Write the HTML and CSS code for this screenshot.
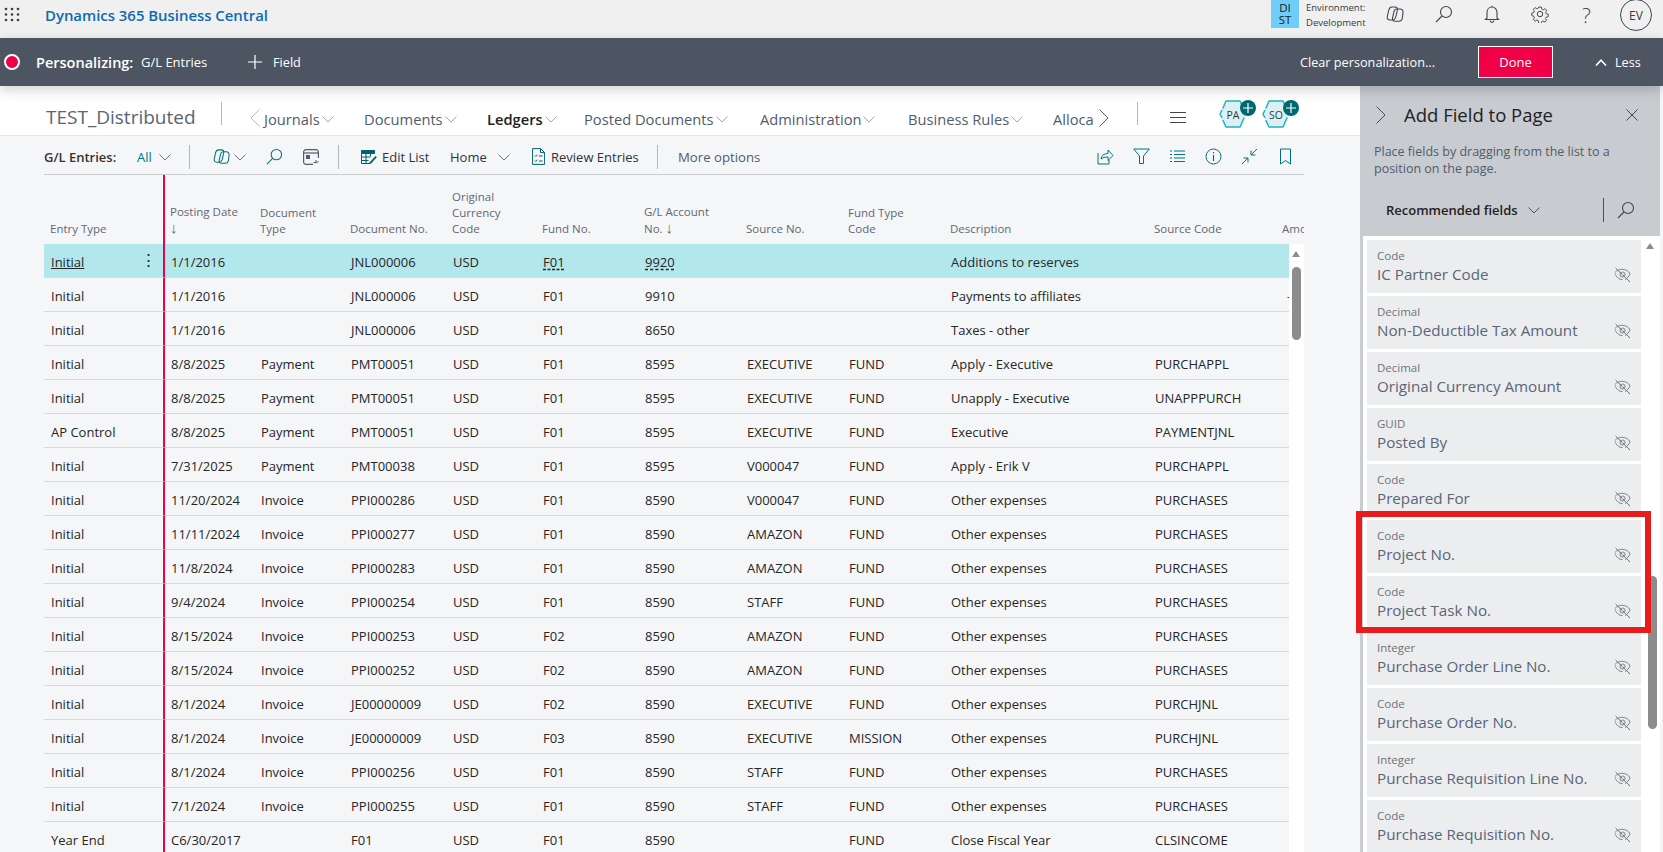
FILE: index.html
```html
<!DOCTYPE html>
<html lang="en">
<head>
<meta charset="utf-8">
<title>G/L Entries</title>
<link rel="stylesheet" href="styles.css">
</head>
<body>
<svg class="sprite" width="0" height="0" aria-hidden="true">
  <symbol id="i-chev" viewBox="0 0 12 7"><path d="M.5.5 6 6 11.500.5" fill="none" stroke="currentColor"/></symbol>
  <symbol id="i-search" viewBox="0 0 18 18"><circle cx="11" cy="7" r="5.500" fill="none" stroke="currentColor" stroke-width="1.100"/><path d="M7 11 1 17" fill="none" stroke="currentColor" stroke-width="1.100"/></symbol>
  <symbol id="i-copilot" viewBox="0 0 18 18"><path d="M6 2h3c1.800 0 2.800 1.200 2.400 3l-1.500 6.500C9.400 13.700 8 15 6 15H4c-2 0-3.200-1.400-2.700-3.400L2.800 5C3.300 3 4.200 2 6 2Z" fill="none" stroke="currentColor" stroke-width="1.100"/><path d="M10.500 4H14c2 0 3.200 1.400 3 3.400l-.6 5.600c-.3 2-1.500 3.200-3.400 3.200H9c-1.800 0-2.900-1.300-2.500-3L8 6.500C8.400 4.900 9 4 10.500 4Z" fill="none" stroke="currentColor" stroke-width="1.100"/></symbol>
  <symbol id="i-eye" viewBox="0 0 17 16"><path d="M1 5.500C3 3 5.600 2.300 8.500 2.300c3 0 5.600 1.300 7.500 4.500-1.300 2.800-2.700 4.700-5 5.700M1 6.500c1 2.700 3 5.500 7.500 6.300" fill="none" stroke="currentColor" stroke-width=".9"/><circle cx="8.500" cy="7.500" r="2.500" fill="none" stroke="currentColor" stroke-width=".9"/><path d="m1.500 1 14.500 14" fill="none" stroke="currentColor" stroke-width="1"/></symbol>
  <symbol id="i-hex" viewBox="0 0 28 28"><path d="M7 1h14l6 13-6 13H7L1 14Z" fill="#dcf0f2"/><path d="M4 8 7 1h14l3.500 7.500M25 18l-4 9H7l-3-6.500M2.800 10.500 1 14l1.800 3.500" fill="none" stroke="#1fb3bd" stroke-width="1.500" stroke-linecap="round" stroke-linejoin="round"/></symbol>
</svg>

<header class="topbar">
  <svg class="waffle" viewBox="0 0 16 15" width="16" height="15"><g fill="#3b3b3b"><circle cx="2" cy="2" r="1.300"/><circle cx="8" cy="2" r="1.300"/><circle cx="14" cy="2" r="1.300"/><circle cx="2" cy="7.500" r="1.300"/><circle cx="8" cy="7.500" r="1.300"/><circle cx="14" cy="7.500" r="1.300"/><circle cx="2" cy="13" r="1.300"/><circle cx="8" cy="13" r="1.300"/><circle cx="14" cy="13" r="1.300"/></g></svg>
  <div class="brand">Dynamics 365 Business Central</div>
  <div class="env-tile">DI<br>ST</div>
  <div class="env-text">Environment:<br>Development</div>
  <svg class="top-icon ic-copilot" width="18" height="18"><use href="#i-copilot"/></svg>
  <svg class="top-icon ic-search" width="18" height="18"><use href="#i-search"/></svg>
  <svg class="top-icon ic-bell" viewBox="0 0 16 18" width="16" height="18"><path d="M3 13V7.500C3 4.300 5.200 2 8 2s5 2.300 5 5.500V13l1.500 1.500h-13ZM6 15.500c.3 1.300 1 1.900 2 1.900s1.700-.6 2-1.900M8 2V.8" fill="none" stroke="currentColor" stroke-width="1.100"/></svg>
  <svg class="top-icon ic-gear" viewBox="0 0 18 18" width="18" height="18"><circle cx="9" cy="9" r="2.700" fill="none" stroke="currentColor"/><path d="M7.500 1h3l.5 2.400 1.800.8 2-1.300 2 2.100-1.300 2 .7 1.700 2.300.5v3l-2.300.5-.8 1.800 1.300 2-2 2-2-1.300-1.700.8-.5 2.300h-3L7 16.900l-1.800-.8-2 1.300-2.100-2 1.300-2L1.600 11.600-.6 11V8l2.300-.6.7-1.700-1.300-2 2.100-2.100 2 1.300 1.800-.7Z" transform="translate(1.300 1.200) scale(.86)" fill="none" stroke="currentColor" stroke-width="1.100"/></svg>
  <span class="top-help">?</span>
  <div class="avatar">EV</div>
</header>

<div class="personal-bar">
  <span class="rec-dot"></span>
  <span class="pers-label">Personalizing:</span>
  <span class="pers-page">G/L Entries</span>
  <svg class="pers-plus" viewBox="0 0 14 14" width="14" height="14"><path d="M7 0v14M0 7h14" stroke="#fff" stroke-width="1.200"/></svg>
  <span class="pers-field">Field</span>
  <span class="pers-clear">Clear personalization...</span>
  <span class="pers-done">Done</span>
  <svg class="pers-caret" viewBox="0 0 12 7" width="12" height="7"><path d="M1 6.500 6 1.200l5 5.300" fill="none" stroke="#fff" stroke-width="1.600"/></svg>
  <span class="pers-less">Less</span>
</div>

<div class="workspace">
  <main class="content">
    <nav class="nav">
      <div class="company">TEST_Distributed</div>
      <div class="vsep nav-sep"></div>
      <svg class="nav-arrow" viewBox="0 0 10 18" width="10" height="18"><path d="M9.500.5 1 9l8.500 8.500" fill="none" stroke="#b5b9bf"/></svg>
      <div class="nav-item">Journals<svg class="chev" width="12" height="7"><use href="#i-chev"/></svg></div>
      <div class="nav-item">Documents<svg class="chev" width="12" height="7"><use href="#i-chev"/></svg></div>
      <div class="nav-item nav-active">Ledgers<svg class="chev" width="12" height="7"><use href="#i-chev"/></svg></div>
      <div class="nav-item">Posted Documents<svg class="chev" width="12" height="7"><use href="#i-chev"/></svg></div>
      <div class="nav-item">Administration<svg class="chev" width="12" height="7"><use href="#i-chev"/></svg></div>
      <div class="nav-item">Business Rules<svg class="chev" width="12" height="7"><use href="#i-chev"/></svg></div>
      <div class="nav-item nav-clip">Alloca</div>
      <svg class="nav-arrow" viewBox="0 0 10 18" width="10" height="18"><path d="M.5.5 9 9 .5 17.500" fill="none" stroke="#505c6d"/></svg>
      <div class="vsep nav-sep"></div>
      <svg class="nav-ham" viewBox="0 0 16 11" width="16" height="11"><path d="M0 .5h16M0 5.500h16M0 10.500h16" stroke="#3f4650"/></svg>
      <div class="hex"><svg width="28" height="28"><use href="#i-hex"/></svg><span class="hex-text">PA</span><span class="hex-plus"><svg viewBox="0 0 10 10" width="10" height="10"><path d="M5 0v10M0 5h10" stroke="#fff" stroke-width="1.200"/></svg></span></div>
      <div class="hex"><svg width="28" height="28"><use href="#i-hex"/></svg><span class="hex-text">SO</span><span class="hex-plus"><svg viewBox="0 0 10 10" width="10" height="10"><path d="M5 0v10M0 5h10" stroke="#fff" stroke-width="1.200"/></svg></span></div>
    </nav>

    <div class="toolbar">
      <span class="tb-title">G/L Entries:</span>
      <span class="tb-all">All<svg class="chev tb-chev" width="12" height="7"><use href="#i-chev"/></svg></span>
      <div class="vsep tb-sep"></div>
      <span class="tb-cell"><svg class="teal" width="17" height="17"><use href="#i-copilot"/></svg><svg class="chev tb-chev2" width="12" height="7"><use href="#i-chev"/></svg></span>
      <svg class="teal" width="17" height="17"><use href="#i-search"/></svg>
      <svg class="dark" viewBox="0 0 16 16" width="16" height="16"><path d="M10 15.400H3A2.400 2.400 0 0 1 .6 13V3A2.400 2.400 0 0 1 3 .6h10A2.400 2.400 0 0 1 15.400 3v6" fill="none" stroke="currentColor" stroke-width="1.200"/><path d="M1 4h14" stroke="currentColor" stroke-width="1.200"/><path d="M3 6h4v4H3Z" fill="currentColor"/><path d="M13 11v2.500h-2.500M15.500 12.500l-2.500 1.500" fill="none" stroke="currentColor"/></svg>
      <div class="vsep tb-sep"></div>
      <span class="tb-cell"><svg class="tb-ico-l teal-deep" viewBox="0 0 16 14" width="16" height="14"><path d="M.5.500h13v3H.5Z" fill="currentColor" stroke="currentColor"/><path d="M.5 3.500v10h8M.5 7h9M.5 10.500h7M5 3.500v10M9.500 3.500v3" fill="none" stroke="currentColor"/><path d="m8.500 12.500 6-6.500 1.300 1.200-6 6.500-2 .8Z" fill="currentColor"/></svg>Edit List</span>
      <span class="tb-cell">Home<svg class="chev tb-chev3" width="12" height="7"><use href="#i-chev"/></svg></span>
      <span class="tb-cell"><svg class="tb-ico-r teal-deep" viewBox="0 0 13 17" width="13" height="17"><path d="M.6.600h8l4 4v11.800H.6ZM8.500.600v4h4M2.800 7.500l1 1 1.700-1.800M7 8h3.500M2.800 12.500l1 1 1.700-1.800M7 13h3.500" fill="none" stroke="currentColor"/></svg>Review Entries</span>
      <div class="vsep tb-sep"></div>
      <span class="tb-more">More options</span>
      <div class="tb-right">
        <svg class="teal" viewBox="0 0 17 17" width="17" height="17"><path d="M1 5v11h11v-4M4 11c.5-3.500 3-5.500 7-5.500V2l5 5.500-5 5V9c-3 0-5 .5-7 2Z" fill="none" stroke="currentColor"/></svg>
        <svg class="teal" viewBox="0 0 17 17" width="17" height="17"><path d="M.7 1h15.600L10.500 8v7.500h-4V8Z" fill="none" stroke="currentColor"/></svg>
        <svg class="teal" viewBox="0 0 17 17" width="17" height="17"><path d="M1 3h2M5 3h11M1 6.500h2M5 6.500h11M1 10h2M5 10h11M1 13.500h2M5 13.500h11" stroke="currentColor"/></svg>
        <svg class="teal" viewBox="0 0 17 17" width="17" height="17"><circle cx="8.500" cy="8.500" r="7.500" fill="none" stroke="currentColor"/><path d="M8.500 7v6M8.500 4v1.500" stroke="currentColor" stroke-width="1.200"/></svg>
        <svg class="teal" viewBox="0 0 17 17" width="17" height="17"><path d="M16 1l-6 6M10 2.500V7h4.500M1 16l6-6M7 14.500V10H2.500" fill="none" stroke="currentColor"/></svg>
        <svg class="teal" viewBox="0 0 17 17" width="17" height="17"><path d="M3.500 1h10v15l-5-3.500-5 3.500Z" fill="none" stroke="currentColor"/></svg>
      </div>
    </div>

    <div class="grid-wrap">
      <table class="grid">
        <colgroup>
          <col class="c1"><col class="c2"><col class="c3"><col class="c4"><col class="c5"><col class="c6"><col class="c7"><col class="c8"><col class="c9"><col class="c10"><col class="c11"><col class="c12">
        </colgroup>
        <thead>
          <tr>
            <th class="frozen">Entry Type</th>
            <th>Posting Date<br><span class="sort">↓</span></th>
            <th>Document<br>Type</th>
            <th>Document No.</th>
            <th>Original<br>Currency<br>Code</th>
            <th>Fund No.</th>
            <th>G/L Account<br>No. <span class="sort">↓</span></th>
            <th>Source No.</th>
            <th>Fund Type<br>Code</th>
            <th>Description</th>
            <th>Source Code</th>
            <th class="clip">Amount</th>
          </tr>
        </thead>
        <tbody>
          <tr class="selected"><td class="frozen"><span class="link">Initial</span><span class="dots">⋮</span></td><td>1/1/2016</td><td></td><td>JNL000006</td><td>USD</td><td><span class="dash">F01</span></td><td><span class="dash">9920</span></td><td></td><td></td><td>Additions to reserves</td><td></td><td></td></tr>
          <tr><td class="frozen">Initial</td><td>1/1/2016</td><td></td><td>JNL000006</td><td>USD</td><td>F01</td><td>9910</td><td></td><td></td><td>Payments to affiliates</td><td></td><td class="neg">-</td></tr>
          <tr><td class="frozen">Initial</td><td>1/1/2016</td><td></td><td>JNL000006</td><td>USD</td><td>F01</td><td>8650</td><td></td><td></td><td>Taxes - other</td><td></td><td></td></tr>
          <tr><td class="frozen">Initial</td><td>8/8/2025</td><td>Payment</td><td>PMT00051</td><td>USD</td><td>F01</td><td>8595</td><td>EXECUTIVE</td><td>FUND</td><td>Apply - Executive</td><td>PURCHAPPL</td><td></td></tr>
          <tr><td class="frozen">Initial</td><td>8/8/2025</td><td>Payment</td><td>PMT00051</td><td>USD</td><td>F01</td><td>8595</td><td>EXECUTIVE</td><td>FUND</td><td>Unapply - Executive</td><td>UNAPPPURCH</td><td></td></tr>
          <tr><td class="frozen">AP Control</td><td>8/8/2025</td><td>Payment</td><td>PMT00051</td><td>USD</td><td>F01</td><td>8595</td><td>EXECUTIVE</td><td>FUND</td><td>Executive</td><td>PAYMENTJNL</td><td></td></tr>
          <tr><td class="frozen">Initial</td><td>7/31/2025</td><td>Payment</td><td>PMT00038</td><td>USD</td><td>F01</td><td>8595</td><td>V000047</td><td>FUND</td><td>Apply - Erik V</td><td>PURCHAPPL</td><td></td></tr>
          <tr><td class="frozen">Initial</td><td>11/20/2024</td><td>Invoice</td><td>PPI000286</td><td>USD</td><td>F01</td><td>8590</td><td>V000047</td><td>FUND</td><td>Other expenses</td><td>PURCHASES</td><td></td></tr>
          <tr><td class="frozen">Initial</td><td>11/11/2024</td><td>Invoice</td><td>PPI000277</td><td>USD</td><td>F01</td><td>8590</td><td>AMAZON</td><td>FUND</td><td>Other expenses</td><td>PURCHASES</td><td></td></tr>
          <tr><td class="frozen">Initial</td><td>11/8/2024</td><td>Invoice</td><td>PPI000283</td><td>USD</td><td>F01</td><td>8590</td><td>AMAZON</td><td>FUND</td><td>Other expenses</td><td>PURCHASES</td><td></td></tr>
          <tr><td class="frozen">Initial</td><td>9/4/2024</td><td>Invoice</td><td>PPI000254</td><td>USD</td><td>F01</td><td>8590</td><td>STAFF</td><td>FUND</td><td>Other expenses</td><td>PURCHASES</td><td></td></tr>
          <tr><td class="frozen">Initial</td><td>8/15/2024</td><td>Invoice</td><td>PPI000253</td><td>USD</td><td>F02</td><td>8590</td><td>AMAZON</td><td>FUND</td><td>Other expenses</td><td>PURCHASES</td><td></td></tr>
          <tr><td class="frozen">Initial</td><td>8/15/2024</td><td>Invoice</td><td>PPI000252</td><td>USD</td><td>F02</td><td>8590</td><td>AMAZON</td><td>FUND</td><td>Other expenses</td><td>PURCHASES</td><td></td></tr>
          <tr><td class="frozen">Initial</td><td>8/1/2024</td><td>Invoice</td><td>JE00000009</td><td>USD</td><td>F02</td><td>8590</td><td>EXECUTIVE</td><td>FUND</td><td>Other expenses</td><td>PURCHJNL</td><td></td></tr>
          <tr><td class="frozen">Initial</td><td>8/1/2024</td><td>Invoice</td><td>JE00000009</td><td>USD</td><td>F03</td><td>8590</td><td>EXECUTIVE</td><td>MISSION</td><td>Other expenses</td><td>PURCHJNL</td><td></td></tr>
          <tr><td class="frozen">Initial</td><td>8/1/2024</td><td>Invoice</td><td>PPI000256</td><td>USD</td><td>F01</td><td>8590</td><td>STAFF</td><td>FUND</td><td>Other expenses</td><td>PURCHASES</td><td></td></tr>
          <tr><td class="frozen">Initial</td><td>7/1/2024</td><td>Invoice</td><td>PPI000255</td><td>USD</td><td>F01</td><td>8590</td><td>STAFF</td><td>FUND</td><td>Other expenses</td><td>PURCHASES</td><td></td></tr>
          <tr><td class="frozen">Year End</td><td>C6/30/2017</td><td></td><td>F01</td><td>USD</td><td>F01</td><td>8590</td><td></td><td>FUND</td><td>Close Fiscal Year</td><td>CLSINCOME</td><td></td></tr>
        </tbody>
      </table>
      <div class="grid-scroll">
        <span class="arrow-up"></span>
        <span class="grid-thumb"></span>
      </div>
    </div>
  </main>

  <aside class="panel">
    <div class="panel-head">
      <div class="panel-title-row">
        <svg class="panel-chev" viewBox="0 0 10 18" width="10" height="18"><path d="M.5.500 9 9 .5 17.500" fill="none" stroke="#4a4f57"/></svg>
        <span class="panel-title">Add Field to Page</span>
        <svg class="panel-x" viewBox="0 0 12 12" width="12" height="12"><path d="m.5.500 11 11M11.500.500l-11 11" stroke="#3f4650"/></svg>
      </div>
      <p class="panel-desc">Place fields by dragging from the list to a position on the page.</p>
      <div class="panel-filter">
        <span class="filter-label">Recommended fields</span>
        <svg class="filter-chev" width="12" height="7"><use href="#i-chev"/></svg>
        <span class="filter-sep"></span>
        <svg class="filter-search" width="18" height="18"><use href="#i-search"/></svg>
      </div>
    </div>
    <div class="panel-body">
      <ul class="field-list">
        <li class="field"><div class="f-type">Code</div><div class="f-name">IC Partner Code</div><svg class="f-eye" width="17" height="16"><use href="#i-eye"/></svg></li>
        <li class="field"><div class="f-type">Decimal</div><div class="f-name">Non-Deductible Tax Amount</div><svg class="f-eye" width="17" height="16"><use href="#i-eye"/></svg></li>
        <li class="field"><div class="f-type">Decimal</div><div class="f-name">Original Currency Amount</div><svg class="f-eye" width="17" height="16"><use href="#i-eye"/></svg></li>
        <li class="field"><div class="f-type">GUID</div><div class="f-name">Posted By</div><svg class="f-eye" width="17" height="16"><use href="#i-eye"/></svg></li>
        <li class="field"><div class="f-type">Code</div><div class="f-name">Prepared For</div><svg class="f-eye" width="17" height="16"><use href="#i-eye"/></svg></li>
        <li class="field"><div class="f-type">Code</div><div class="f-name">Project No.</div><svg class="f-eye" width="17" height="16"><use href="#i-eye"/></svg></li>
        <li class="field"><div class="f-type">Code</div><div class="f-name">Project Task No.</div><svg class="f-eye" width="17" height="16"><use href="#i-eye"/></svg></li>
        <li class="field"><div class="f-type">Integer</div><div class="f-name">Purchase Order Line No.</div><svg class="f-eye" width="17" height="16"><use href="#i-eye"/></svg></li>
        <li class="field"><div class="f-type">Code</div><div class="f-name">Purchase Order No.</div><svg class="f-eye" width="17" height="16"><use href="#i-eye"/></svg></li>
        <li class="field"><div class="f-type">Integer</div><div class="f-name">Purchase Requisition Line No.</div><svg class="f-eye" width="17" height="16"><use href="#i-eye"/></svg></li>
        <li class="field"><div class="f-type">Code</div><div class="f-name">Purchase Requisition No.</div><svg class="f-eye" width="17" height="16"><use href="#i-eye"/></svg></li>
      </ul>
      <div class="panel-scroll">
        <span class="arrow-up panel-arrow"></span>
        <span class="panel-thumb"></span>
      </div>
      <div class="highlight"></div>
    </div>
  </aside>
</div>
</body>
</html>
```
FILE: styles.css
```css
* { box-sizing: border-box; }
html, body { height: 100%; }
body {
  margin: 0;
  height: 852px;
  overflow: hidden;
  display: flex;
  flex-direction: column;
  background: #f5f6f8;
  color: #212121;
  font-family: "Open Sans", "Noto Sans", sans-serif;
  font-size: 13px;
}
.sprite { position: absolute; }

/* top bar */
.topbar {
  height: 38px;
  flex: none;
  display: grid;
  grid-template-columns: 45px 1222px 35px 80px 49px 48px 48px 47px 42px 1fr;
  align-items: center;
  padding-left: 4px;
  background: #f0f0f0;
  color: #3b3b3b;
  overflow: hidden;
}
.waffle { margin-top: -10px; }
.brand { justify-self: start; color: #0f6ab0; font-size: 14.900px; font-weight: 600; margin-left: -4px; margin-top: -8px; white-space: nowrap; }
.env-tile {
  width: 28px; height: 28px; align-self: start;
  background: #6fcdfb; color: #1a1a1a;
  font-size: 11.500px; line-height: 12px; text-align: center;
  padding-top: 2px;
}
.env-text { font-size: 9.500px; line-height: 15px; color: #3b3b3b; align-self: start; }
.top-icon { color: #3f4650; margin-top: -10px; justify-self: start; }
.ic-bell { margin-left: 1px; }
.top-help { font-size: 21px; font-weight: 300; color: #3f4650; margin-top: -8px; margin-left: 4px; }
.avatar {
  width: 32px; height: 32px; border-radius: 50%;
  border: 1px solid #3f4650; color: #3b3b3b;
  display: flex; align-items: center; justify-content: center;
  font-size: 12px; align-self: start; margin-top: -1px;
}

/* personalization bar */
.personal-bar {
  height: 48px;
  flex: none;
  position: relative;
  z-index: 3;
  display: grid;
  grid-template-columns: 36px 105px 107px 25px 1027px 178px 75px 62px auto;
  align-items: center;
  background: #4d5562;
  color: #fff;
  box-shadow: 0 4px 12px rgba(0,0,0,.18);
}
.rec-dot {
  width: 16px; height: 16px; border-radius: 50%;
  background: #ef0047; border: 2px solid #fff;
  margin-left: 4px;
}
.pers-label { font-weight: 600; font-size: 14.500px; white-space: nowrap; }
.pers-page { font-size: 13px; }
.pers-field, .pers-clear, .pers-less { font-size: 12.700px; white-space: nowrap; }
.pers-done {
  height: 32px; display: flex; align-items: center; justify-content: center;
  background: #ef0047; border: 1px solid #fff; font-size: 13px;
}
.pers-caret { margin-left: 42px; }

/* workspace */
.workspace { flex: 1; display: flex; min-height: 0; }
.content { width: 1360px; flex: none; display: flex; flex-direction: column; min-height: 0; }
.vsep { width: 1px; background: #b5b9bf; }

.nav {
  height: 50px;
  flex: none;
  display: grid;
  grid-template-columns: 175px 29px 14px 100px 123px 97px 176px 148px 145px 46px 38px 33px 49px 43px 1fr;
  align-items: center;
  padding-left: 46px;
  background: #fff;
  border-bottom: 1px solid #e6e7e9;
  color: #505c6d;
  font-size: 14.700px;
}
.company { font-size: 19px; color: #5a6472; margin-top: 12px; white-space: nowrap; }
.nav-sep { height: 23px; margin-top: 6px; }
.nav-arrow { margin-top: 14px; }
.nav-item { display: flex; align-items: center; gap: 2px; white-space: nowrap; margin-top: 16px; }
.nav-active { color: #212121; font-weight: 600; }
.nav-clip { overflow: hidden; width: 43px; }
.chev { color: #a3a8af; margin-top: 2px; flex: none; }
.nav-ham { margin-top: 14px; }
.hex { position: relative; width: 28px; height: 28px; margin-top: 6px; }
.hex svg { display: block; }
.hex-text {
  position: absolute; inset: 0;
  display: flex; align-items: center; justify-content: center;
  font-size: 10.500px; color: #2f3a45; padding-top: 2px;
}
.hex-plus {
  position: absolute; top: 0; right: -9px;
  width: 16px; height: 16px; border-radius: 50%;
  background: #00696f;
  display: flex; align-items: center; justify-content: center;
}

.toolbar {
  height: 39px;
  flex: none;
  margin-left: 44px;
  width: 1260px;
  padding-top: 3px;
  display: grid;
  grid-template-columns: 93px 52px 24px 53px 37px 35px 23px 89px 82px 125px 21px 1fr auto;
  align-items: center;
  border-bottom: 1px solid #c9cbcf;
  font-size: 13px;
  color: #2f3338;
}
.tb-title { font-weight: 600; font-size: 13px; color: #333; white-space: nowrap; }
.tb-all { color: #007a8a; display: flex; align-items: center; font-size: 13px; }
.tb-chev { margin-left: 7px; color: #6c7078; }
.tb-sep { height: 24px; }
.tb-cell { display: flex; align-items: center; white-space: nowrap; }
.tb-chev2 { margin-left: 4px; color: #6c7078; }
.tb-chev3 { margin-left: 11px; color: #6c7078; }
.tb-ico-l { margin-right: 5px; }
.tb-ico-r { margin-right: 6px; }
.teal { color: #00747c; }
.teal-deep { color: #00606b; }
.dark { color: #505c6d; }
.tb-more { color: #505c6d; font-size: 13.200px; }
.tb-right { display: flex; justify-content: flex-end; gap: 19px; padding-right: 10px; }

.grid-wrap { position: relative; margin-left: 44px; width: 1260px; flex: 1; min-height: 0; overflow: hidden; }
.grid { width: 1260px; table-layout: fixed; border-collapse: separate; border-spacing: 0; }
.c1 { width: 121px; } .c2 { width: 89px; } .c3 { width: 90px; } .c4 { width: 102px; }
.c5 { width: 90px; } .c6 { width: 102px; } .c7 { width: 102px; } .c8 { width: 102px; }
.c9 { width: 102px; } .c10 { width: 204px; } .c11 { width: 128px; } .c12 { width: 28px; }
th {
  height: 69px; padding: 0 0 7px 6px;
  vertical-align: bottom; text-align: left;
  font-weight: 400; font-size: 11.500px; line-height: 16px;
  color: #5f6873;
  white-space: nowrap;
}
.frozen + th { padding-left: 5px; }
th.clip { overflow: hidden; }
.sort { font-size: 15px; line-height: 14px; }
td {
  height: 34px; padding: 2px 0 0 7px;
  border-bottom: 1px solid #d7d9dc;
  font-size: 13px;
  color: #262626;
  white-space: nowrap;
  overflow: hidden;
}
.frozen + td { padding-left: 6px; }
.frozen { border-right: 2px solid #ef0047; position: relative; }
.selected td { background: #b2e8ec; }
.link { text-decoration: underline; }
.dash { text-decoration: underline dashed; text-underline-offset: 2px; }
.dots { position: absolute; right: 6px; top: 4px; font-size: 17px; font-weight: 400; }
td.neg { color: #8a1a1a; padding-left: 11px; }

.grid-scroll {
  position: absolute; right: 0; top: 69px; bottom: 0;
  width: 15px; background: #fff;
}
.arrow-up {
  position: absolute; top: 7px; left: 3px;
  width: 0; height: 0;
  border-left: 4.500px solid transparent;
  border-right: 4.500px solid transparent;
  border-bottom: 6px solid #8c8c8c;
}
.grid-thumb {
  position: absolute; left: 3px; top: 23px;
  width: 9px; height: 73px; border-radius: 5px; background: #8c8c8c;
}

/* side panel */
.panel { width: 300px; flex: none; display: flex; flex-direction: column; min-height: 0; background: #fff; }
.panel-head { height: 150px; flex: none; background: #c8cbd0; padding: 0 0 0 14px; }
.panel-title-row { height: 57px; display: flex; align-items: center; }
.panel-chev { margin-left: 2px; }
.panel-title { font-size: 18.500px; color: #222; margin-left: 18px; width: 222px; white-space: nowrap; margin-top: -1px; }
.panel-x { flex: none; }
.panel-desc { margin: 0; width: 270px; font-size: 12.500px; line-height: 17px; color: #505c6d; }
.panel-filter { display: flex; align-items: center; margin-top: 21px; padding-left: 12px; height: 24px; }
.filter-label { font-weight: 600; font-size: 13px; color: #222; width: 142px; white-space: nowrap; }
.filter-chev { color: #4a4f57; }
.filter-sep { width: 1px; height: 24px; background: #4a4f57; margin-left: 63px; }
.filter-search { color: #3f4650; margin-left: 13px; }

.panel-body { position: relative; flex: 1; min-height: 0; display: flex; border-left: 3px solid #c8cbd0; }
.field-list { list-style: none; margin: 4px 0 0; padding: 0 0 0 4px; width: 278px; display: flex; flex-direction: column; gap: 3px; }
.field { position: relative; height: 53px; flex: none; background: #ecedef; padding: 8px 0 0 10px; }
.f-type { font-size: 11.500px; line-height: 16px; color: #6f737a; }
.f-name { font-size: 15.200px; line-height: 21px; color: #5a6578; white-space: nowrap; }
.f-eye { position: absolute; right: 10px; top: 27px; color: #6c727b; }

.panel-scroll { position: relative; width: 19px; flex: none; background: #fff; }
.panel-arrow { top: 7px; left: 5px; }
.panel-thumb {
  position: absolute; left: 7px; top: 340px;
  width: 9px; height: 153px; border-radius: 5px; background: #8c8c8c;
}
.highlight {
  position: absolute; left: -7px; top: 275px;
  width: 295px; height: 122px;
  border: 6px solid #e81c1c;
  pointer-events: none;
}
```
